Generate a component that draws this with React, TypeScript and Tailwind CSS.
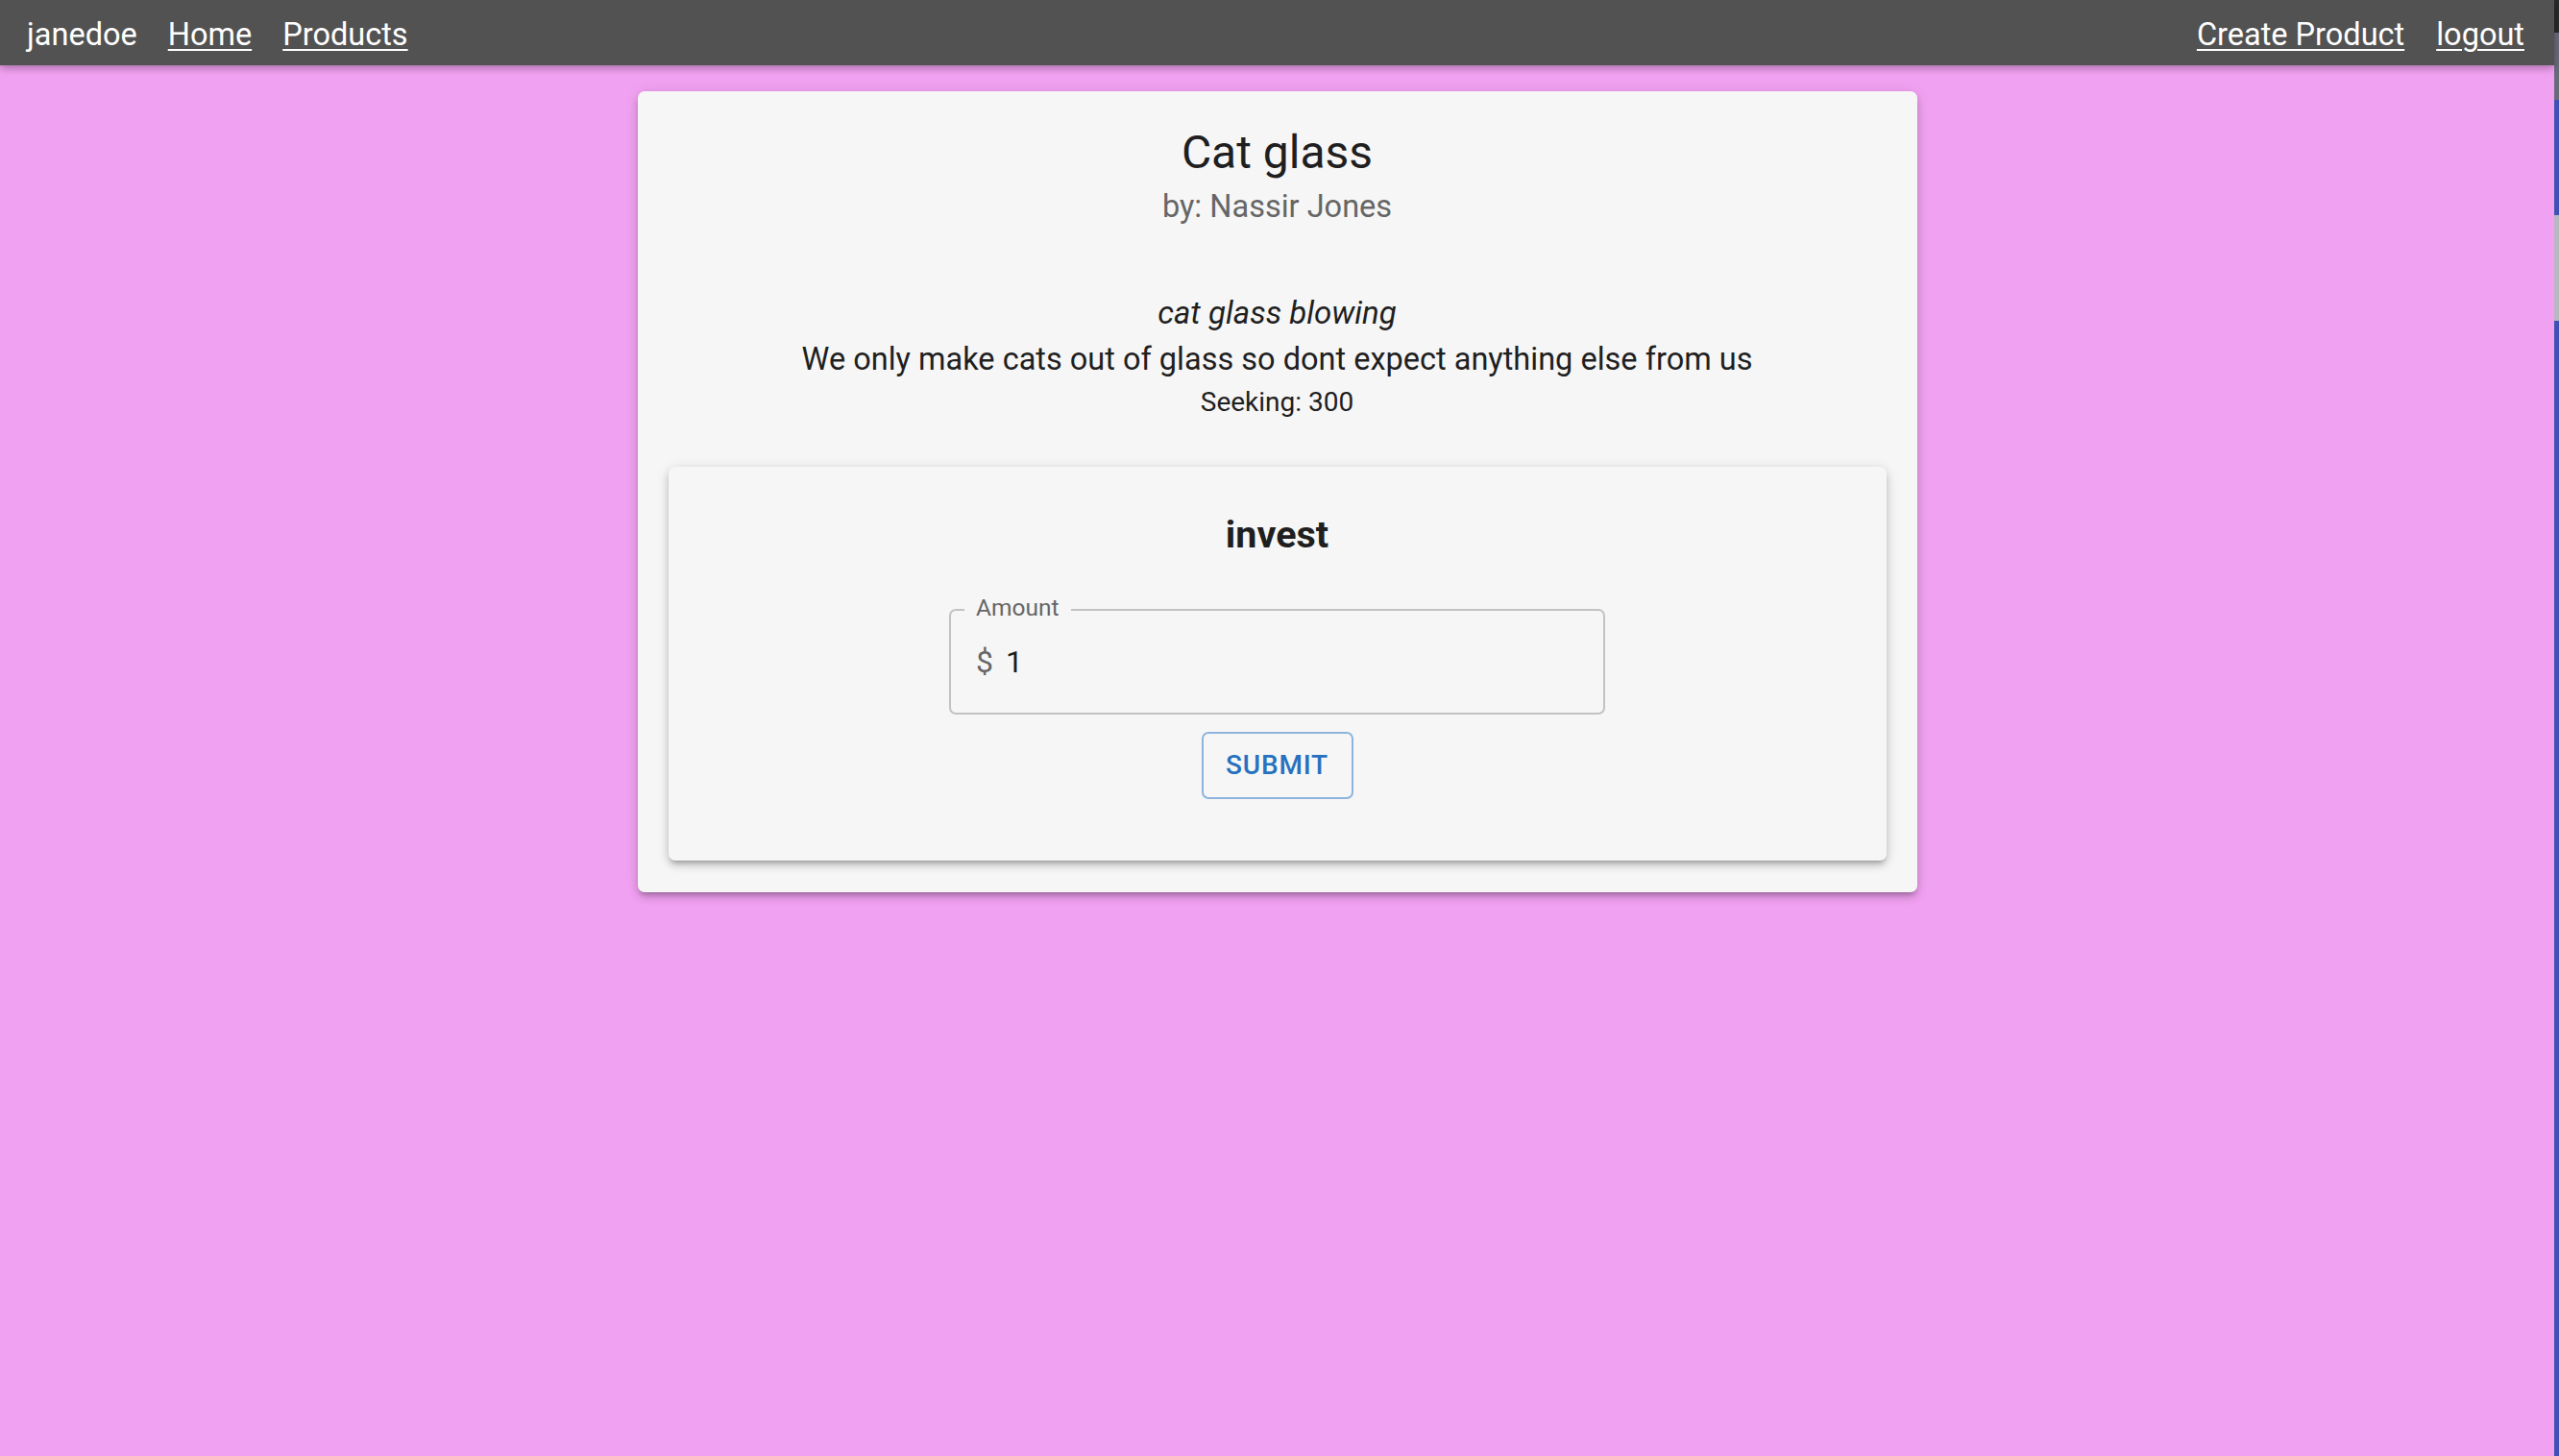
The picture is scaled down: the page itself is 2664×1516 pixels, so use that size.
import React from 'react';

const NavLink: React.FC<{ label: string }> = ({ label }) => (
    <a href="#" className="text-white underline decoration-2 underline-offset-[4px]">{label}</a>
);

const Navbar: React.FC = () => (
    <nav className="relative z-10 flex h-[68px] items-center justify-between bg-[#525252] pl-[28px] pr-[31px] pt-[3px] text-[32.5px] leading-[38px] shadow-[0_3px_8px_rgba(0,0,0,0.3)]">
        <div className="flex items-center gap-[32px]">
            <span className="text-white">janedoe</span>
            <NavLink label="Home" />
            <NavLink label="Products" />
        </div>
        <div className="flex items-center gap-[33px]">
            <NavLink label="Create Product" />
            <NavLink label="logout" />
        </div>
    </nav>
);

const InvestForm: React.FC = () => (
    <div className="mt-[51px] flex flex-col items-center rounded-[7px] bg-[#f6f6f6] pb-[64px] pt-[47px] shadow-[0_5px_5px_-3px_rgba(0,0,0,0.22),0_5px_8px_0_rgba(0,0,0,0.14),0_2px_14px_0_rgba(0,0,0,0.12)]">
        <h2 className="text-[39.5px] font-bold leading-[48px] text-[#1f1f1f]">invest</h2>

        {/* outlined text field */}
        <div className="relative mt-[53px] flex h-[110px] w-[683px] items-center rounded-[7px] border-2 border-[#c2c2c2] px-[26px]">
            <span className="absolute left-[14px] top-[-17px] bg-[#f6f6f6] px-[12px] text-[24.5px] leading-[28px] text-[#666666]">Amount</span>
            <span className="text-[32px] leading-none text-[#666666]">$</span>
            <span className="ml-[13px] text-[32px] leading-none text-[#1f1f1f]">1</span>
        </div>

        <button className="mt-[18px] flex h-[70px] w-[158px] items-center justify-center rounded-[7px] border-2 border-[#8fb4de] text-[28px] font-medium uppercase leading-none tracking-[0.03em] text-[#2671c0]">
            Submit
        </button>
    </div>
);

const App: React.FC = () => {
    return (
        <div className="flex min-h-screen font-['Roboto',sans-serif]">
            <div className="flex min-h-screen flex-1 flex-col bg-[#f1a1f1]">
                <Navbar />
                <main className="flex-1">
                    <div className="mx-auto mt-[27px] w-[1332px] rounded-[7px] bg-[#f6f6f6] px-[32px] pb-[33px] pt-[36px] text-center shadow-[0_5px_5px_-3px_rgba(0,0,0,0.2),0_5px_8px_0_rgba(0,0,0,0.14),0_2px_14px_0_rgba(0,0,0,0.12)]">
                        <h1 className="text-[48px] leading-[56px] text-[#1f1f1f]">Cat glass</h1>
                        <p className="mt-[9px] text-[32.5px] leading-[38px] text-[#666666]">by: Nassir Jones</p>

                        <p className="mt-[73px] text-[33px] italic leading-[38px] text-[#1f1f1f]">cat glass blowing</p>
                        <p className="mt-[10px] text-[32.5px] leading-[38px] text-[#1f1f1f]">We only make cats out of glass so dont expect anything else from us</p>
                        <p className="mt-[10px] text-[28px] leading-[32px] text-[#1f1f1f]">Seeking: 300</p>

                        <InvestForm />
                    </div>
                </main>
            </div>
            {/* sliver of another window at the right edge */}
            <div className="flex w-[5px] flex-col">
                <div className="h-[34px] bg-[#2a2a2a]" />
                <div className="h-[70px] bg-[#6a6a7a]" />
                <div className="h-[120px] bg-[#3f51b5]" />
                <div className="h-[110px] bg-[#b8b8c0]" />
                <div className="flex-1 bg-[#3f51b5]" />
            </div>
        </div>
    );
};

export default App;
